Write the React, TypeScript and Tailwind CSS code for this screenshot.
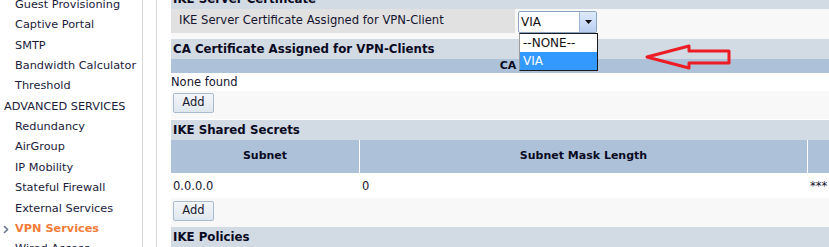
import React from 'react';

const sideItems = [
  { label: 'Guest Provisioning' },
  { label: 'Captive Portal' },
  { label: 'SMTP' },
  { label: 'Bandwidth Calculator' },
  { label: 'Threshold' },
  { label: 'ADVANCED SERVICES', group: true },
  { label: 'Redundancy' },
  { label: 'AirGroup' },
  { label: 'IP Mobility' },
  { label: 'Stateful Firewall' },
  { label: 'External Services' },
  { label: 'VPN Services', active: true },
  { label: 'Wired Access' },
];

function AddButton({ top }: { top: string }) {
  return (
    <button
      className={`${top} ml-[2px] h-[20px] w-[41px] rounded-[2px] border border-[#a9bccf] bg-gradient-to-b from-[#f3f6f9] to-[#dfe7ef] text-[11.5px] text-[#1a1a2e] leading-none`}
    >
      Add
    </button>
  );
}

function SectionHeader({ title, className = '' }: { title: string; className?: string }) {
  return (
    <div className={`h-[20px] shrink-0 bg-[#d2dae3] pl-[2px] font-bold text-[11.8px] leading-[20px] text-[#0a0a22] whitespace-nowrap ${className}`}>
      {title}
    </div>
  );
}

export default function App() {
  return (
    <div className="flex w-[829px] h-[247px] overflow-hidden bg-white font-['DejaVu_Sans',Verdana,sans-serif] text-[11px]">
      {/* left nav */}
      <aside className="w-[143px] shrink-0 border-r border-[#d6d6d6]">
        <ul className="-mt-[5px] text-[11.3px]">
          {sideItems.map((item) => (
            <li
              key={item.label}
              className={`relative flex h-[20.4px] items-center whitespace-nowrap ${item.group ? 'pl-[4px] text-[#1b1b3b]' : 'pl-[15px]'} ${item.active ? 'font-bold text-[#f27c38]' : 'text-[#1b1b3b]'}`}
            >
              {item.active && (
                <svg className="absolute left-[3px] top-[6px]" width="6" height="9" viewBox="0 0 6 9">
                  <path d="M1 1 L4.5 4.5 L1 8" fill="none" stroke="#6b7896" strokeWidth="1.6" />
                </svg>
              )}
              {item.label}
            </li>
          ))}
        </ul>
      </aside>
      <div className="w-[14px] shrink-0 border-r border-[#d6d6d6]" />

      {/* main content */}
      <main className="relative ml-[14px] w-[674px] shrink-0 flex flex-col">
        <SectionHeader title="IKE Server Certificate" className="-mt-[11px]" />

        <div className="flex h-[30px] shrink-0 bg-[#f8f8f8]">
          <div className="h-[24px] w-[344px] bg-[#e1e1e1] pl-[8px] pt-[1px] text-[11.6px] leading-[20px] text-[#14142e] whitespace-nowrap">
            IKE Server Certificate Assigned for VPN-Client
          </div>
          <div className="ml-[3px] mt-[2px] flex h-[22px] w-[79px] rounded-[2px] border border-[#8ea5c2] bg-white">
            <span className="flex-1 pl-[2px] text-[12px] leading-[20px] text-[#111]">VIA</span>
            <span className="flex w-[17px] items-center justify-center rounded-[1px] border-l border-[#9db5d6] bg-gradient-to-b from-[#dfeafb] to-[#b9cff0]">
              <svg width="7" height="4" viewBox="0 0 7 4">
                <path d="M0 0 H7 L3.5 4 Z" fill="#111" />
              </svg>
            </span>
          </div>
        </div>

        <SectionHeader title="CA Certificate Assigned for VPN-Clients" />
        <div className="h-[14px] shrink-0 bg-[#adc2d9] text-center font-bold leading-[14px] text-[#0a0a22]">CA</div>
        <div className="h-[18px] shrink-0 text-[11.5px] leading-[18px] text-[#14142e]">None found</div>
        <div className="h-[28px] shrink-0 bg-[#f8f8f8]">
          <AddButton top="mt-[2px]" />
        </div>
        <div className="h-[1px] shrink-0" />

        <SectionHeader title="IKE Shared Secrets" />
        <div className="grid h-[33px] shrink-0 grid-cols-[188px_447px_1fr] gap-x-[1px] bg-white font-bold text-[#0a0a22]">
          <div className="flex items-center justify-center bg-[#adc2d9]">Subnet</div>
          <div className="flex items-center justify-center bg-[#adc2d9]">Subnet Mask Length</div>
          <div className="bg-[#adc2d9]" />
        </div>
        <div className="grid h-[25px] shrink-0 grid-cols-[188px_447px_1fr] gap-x-[1px] pt-[1px] text-[11.5px] leading-[25px] text-[#14142e]">
          <div className="pl-[2px]">0.0.0.0</div>
          <div className="pl-[2px]">0</div>
          <div className="pl-[2px]">***</div>
        </div>
        <div className="h-[29px] shrink-0 bg-[#f8f8f8]">
          <AddButton top="mt-[3px]" />
        </div>

        <SectionHeader title="IKE Policies" />

        {/* open select list */}
        <div className="absolute left-[348px] top-[33px] w-[79px] border border-[#1a1a1a] border-l-[#9a9a9a] bg-white text-[12px]">
          <div className="h-[18px] pl-[3px] leading-[18px] text-[#111]">--NONE--</div>
          <div className="h-[18px] bg-[#3399ff] pl-[3px] leading-[18px] text-white">VIA</div>
        </div>

        {/* annotation arrow */}
        <svg className="absolute left-[469px] top-[40px]" width="95" height="35" viewBox="0 0 95 35">
          <polygon
            points="7,17 49,6 49,11 89,11 89,23 49,23 49,28"
            fill="none"
            stroke="#ed1c24"
            strokeWidth="3"
            strokeLinejoin="round"
          />
        </svg>
      </main>
    </div>
  );
}
